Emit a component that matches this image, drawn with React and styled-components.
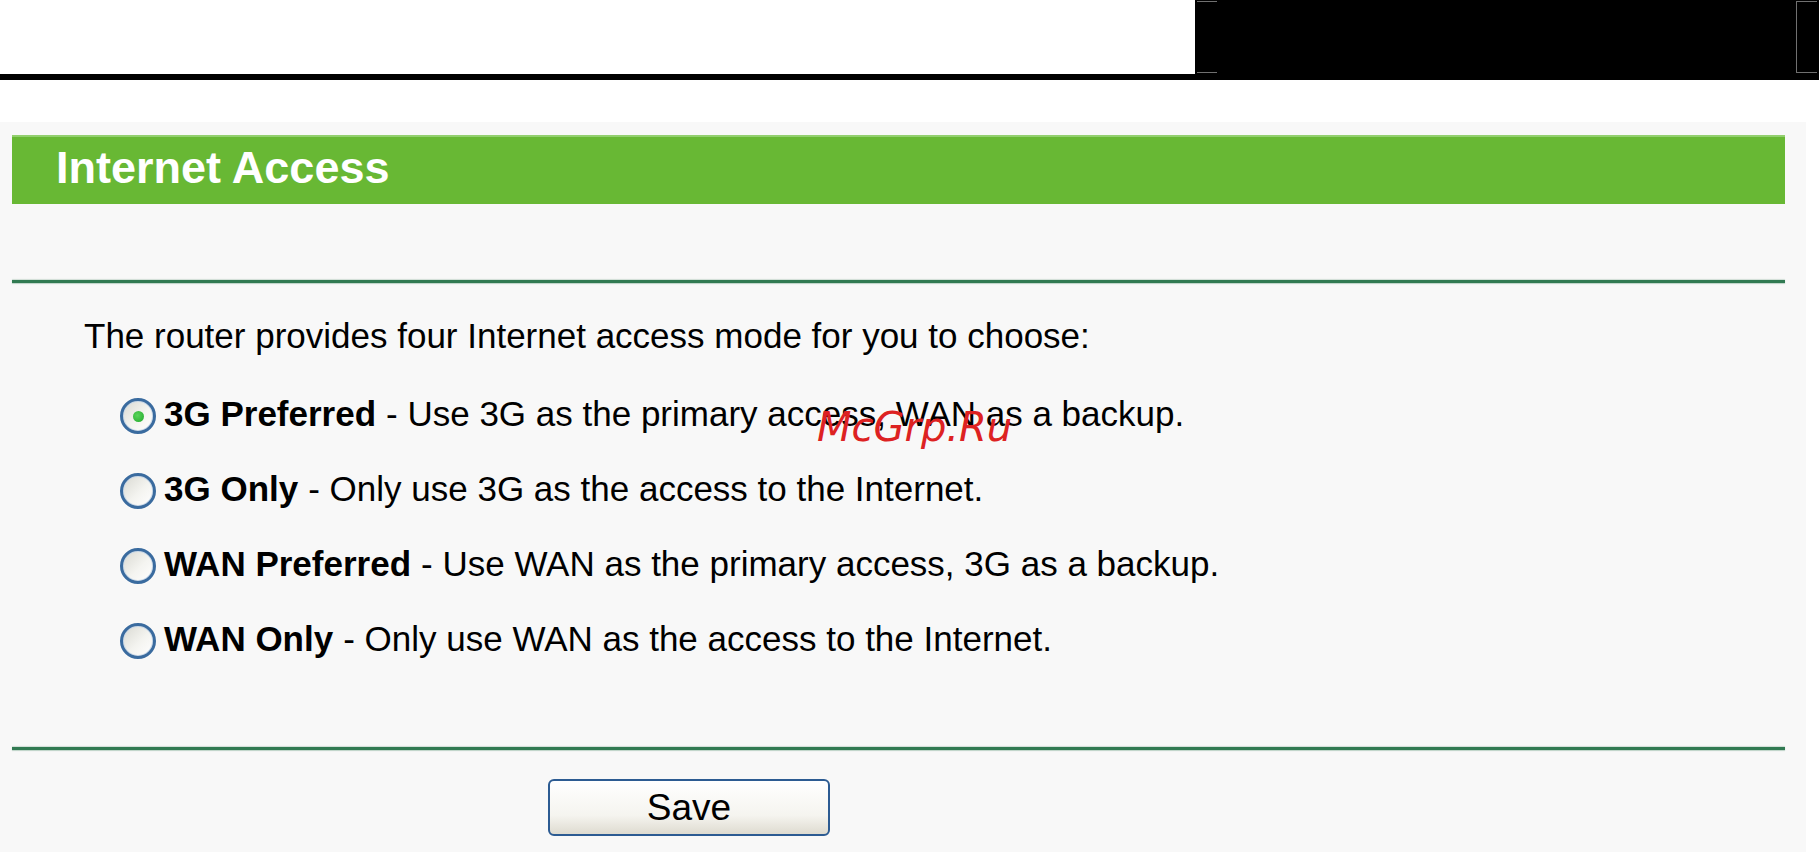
import React from "react";
import styled, { createGlobalStyle } from "styled-components";

const GlobalStyle = createGlobalStyle`
  html, body {
    margin: 0;
    padding: 0;
    background: #fff;
  }
  body {
    font-family: "Liberation Sans", Arial, sans-serif;
    overflow: hidden;
  }
`;

const TopStrip = styled.div`
  display: flex;
  justify-content: flex-end;
  height: 74px;
`;

const Screen = styled.div`
  width: 624px;
  background: #000;
  display: flex;
  justify-content: space-between;
  padding: 1px 2px;
  box-sizing: border-box;
`;

const Bracket = styled.div`
  width: 20px;
  border-top: 1px solid #707070;
  border-bottom: 1px solid #707070;
  ${props => props.$closed && "border-left: 1px solid #707070;"}
`;

const Rule = styled.div`
  height: 6px;
  background: #000;
`;

const Panel = styled.div`
  position: relative;
  width: 1806px;
  margin-top: 42px;
  min-height: calc(100vh - 122px);
  box-sizing: border-box;
  padding: 13px 21px 0 12px;
  background: #f8f8f8;
`;

const Header = styled.div`
  height: 69px;
  line-height: 65px;
  padding-left: 44px;
  background: #68b834;
  box-shadow: inset 0 2px 0 #92cf6e;
  color: #fff;
  font-size: 45px;
  font-weight: bold;
`;

const Divider = styled.div`
  height: 3px;
  margin-top: ${props => props.$top}px;
  background: #317a52;
  box-shadow: 0 1px 1px rgba(49, 122, 82, 0.3), 0 -1px 1px rgba(49, 122, 82, 0.2);
`;

const Intro = styled.div`
  margin-top: 33px;
  padding-left: 72px;
  font-size: 35px;
  line-height: 40px;
  color: #000;
`;

const Options = styled.div`
  margin-top: 38px;
  padding-left: 108px;
  display: flex;
  flex-direction: column;
  gap: 35px;
`;

const Option = styled.label`
  display: flex;
  align-items: center;
  height: 40px;
  font-size: 35px;
  color: #000;
  white-space: nowrap;
`;

const Radio = styled.span`
  flex: none;
  width: 36px;
  height: 36px;
  margin: 4px 8px 0 0;
  box-sizing: border-box;
  border-radius: 50%;
  border: 3px solid #3a6b9f;
  box-shadow: inset 0 0 0 1px #c9d8e8;
  background: linear-gradient(135deg, #d9d9d2 0%, #f4f4f0 55%, #ffffff 100%);
  display: grid;
  place-items: center;
`;

const Dot = styled.span`
  width: 11px;
  height: 11px;
  border-radius: 50%;
  background: radial-gradient(circle at 40% 40%, #5ad45a, #1fa82a);
`;

const Name = styled.b`
  margin-right: 10px;
`;

const ButtonRow = styled.div`
  margin-top: 29px;
  padding-left: 536px;
`;

const SaveButton = styled.button`
  width: 282px;
  height: 57px;
  padding: 0;
  border: 2px solid #2c5b92;
  border-radius: 6px;
  background: linear-gradient(#ffffff, #f5f4ef 65%, #dedbd0);
  color: #000;
  font-family: "Liberation Sans", Arial, sans-serif;
  font-size: 37px;
`;

const Watermark = styled.div`
  position: absolute;
  left: 817px;
  top: 285px;
  font-family: "DejaVu Sans", sans-serif;
  font-style: italic;
  font-size: 40px;
  line-height: 40px;
  color: #dd2222;
  pointer-events: none;
`;

const options = [
  { name: "3G Preferred", text: "- Use 3G as the primary access, WAN as a backup.", checked: true },
  { name: "3G Only", text: "- Only use 3G as the access to the Internet." },
  { name: "WAN Preferred", text: "- Use WAN as the primary access, 3G as a backup." },
  { name: "WAN Only", text: "- Only use WAN as the access to the Internet." },
];

export default function App() {
  return (
    <>
      <GlobalStyle />
      <TopStrip>
        <Screen>
          <Bracket />
          <Bracket $closed />
        </Screen>
      </TopStrip>
      <Rule />
      <Panel>
        <Header>Internet Access</Header>
        <Divider $top={76} />
        <Intro>The router provides four Internet access mode for you to choose:</Intro>
        <Options>
          {options.map(o => (
            <Option key={o.name}>
              <Radio>{o.checked && <Dot />}</Radio>
              <Name>{o.name}</Name>
              {o.text}
            </Option>
          ))}
        </Options>
        <Divider $top={88} />
        <ButtonRow>
          <SaveButton>Save</SaveButton>
        </ButtonRow>
        <Watermark>McGrp.Ru</Watermark>
      </Panel>
    </>
  );
}
